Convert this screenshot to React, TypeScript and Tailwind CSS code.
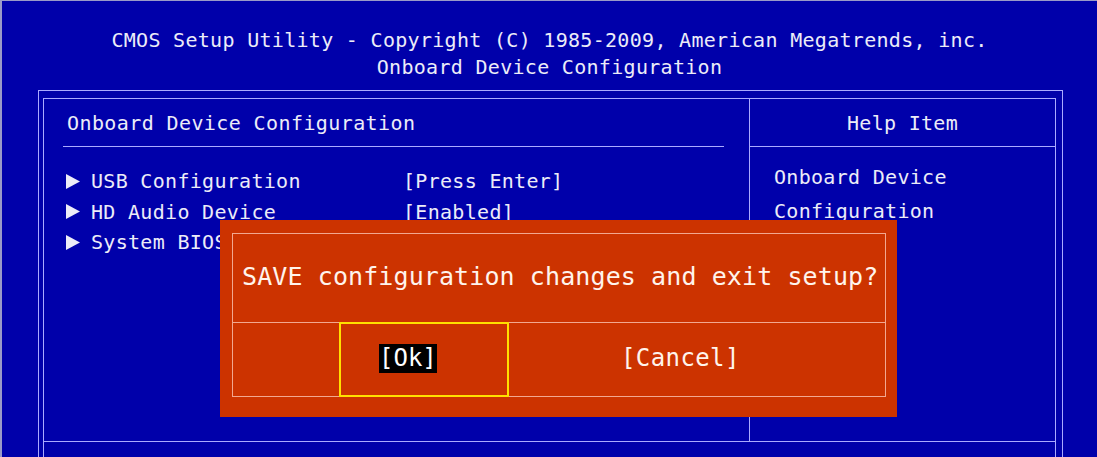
import React from "react";

const mono = { fontFamily: '"DejaVu Sans Mono", "Liberation Mono", monospace' };

function Arrow() {
  return (
    <svg width="14" height="15" viewBox="0 0 14 15" className="shrink-0">
      <polygon points="0,0 14,7.5 0,15" fill="#ececf8" />
    </svg>
  );
}

const items = [
  { name: "USB Configuration", value: "[Press Enter]" },
  { name: "HD Audio Device", value: "[Enabled]" },
  { name: "System BIOS Cache", value: "[Enabled]" },
];

export default function App() {
  return (
    <div
      className="relative w-[1097px] h-[457px] overflow-hidden bg-[#0000aa] border-t border-l-2 border-[#9a9ac8] text-[#ececf8] text-[20px] tracking-[0.3px]"
      style={mono}
    >
      {/* header */}
      <div className="pt-[26px] leading-[27px] text-center whitespace-pre">
        <div>CMOS Setup Utility - Copyright (C) 1985-2009, American Megatrends, inc.</div>
        <div>Onboard Device Configuration</div>
      </div>

      {/* outer frame */}
      <div className="mt-[9px] ml-[36px] w-[1025px] h-[400px] border border-[#aaaaff] pt-[7px] pl-[4px] pr-[6px]">
        <div className="w-[1013px] h-[400px] border border-[#aaaaff] flex flex-col">
          <div className="flex h-[342px] shrink-0">
            {/* left column */}
            <div className="w-[705px] shrink-0">
              <div className="ml-[19px] w-[661px] h-[48px] border-b border-[#aaaaff] pl-[4px] flex items-center leading-[24px] tracking-[0.4px]">
                Onboard Device Configuration
              </div>
              <div className="mt-[19px]">
                {items.map((it) => (
                  <div key={it.name} className="flex items-center h-[30.5px] leading-[30.5px] whitespace-pre">
                    <div className="ml-[22px] w-[25px] shrink-0 flex items-center">
                      <Arrow />
                    </div>
                    <div className="w-[312px] shrink-0">{it.name}</div>
                    <div>{it.value}</div>
                  </div>
                ))}
              </div>
            </div>
            {/* right column */}
            <div className="w-[306px] shrink-0 border-l border-[#aaaaff]">
              <div className="h-[48px] border-b border-[#aaaaff] flex items-center justify-center leading-[24px]">
                Help Item
              </div>
              <div className="pt-[12.5px] pl-[24px] leading-[34px]">
                <div>Onboard Device</div>
                <div>Configuration</div>
              </div>
            </div>
          </div>
          <div className="flex-1 border-t border-[#aaaaff]" />
        </div>
      </div>

      {/* dialog */}
      <div className="absolute left-[218px] top-[219px] w-[677px] h-[197px] bg-[#cc3300] pt-[13px] pl-[12px] pr-[11px] pb-[20px] tracking-normal">
        <div className="h-full border border-[#f2a890] flex flex-col text-[#fff4ec]">
          <div className="h-[89px] shrink-0 border-b border-[#f2a890] flex items-center pl-[9px] pb-[3px] text-[25px] leading-[30px] tracking-[0.1px] whitespace-pre">
            SAVE configuration changes and exit setup?
          </div>
          <div className="h-[73px] shrink-0 flex">
            <div className="ml-[106px] w-[170px] h-[75px] -my-px shrink-0 border-2 border-[#ffe000] flex items-center pl-[38px] pb-[3px]">
              <span className="bg-black text-white text-[24px] leading-[29px]">[Ok]</span>
            </div>
            <div className="flex items-center pl-[112px] pb-[3px] text-[24px] leading-[29px] tracking-[0.4px] whitespace-pre">
              [Cancel]
            </div>
          </div>
        </div>
      </div>
    </div>
  );
}
